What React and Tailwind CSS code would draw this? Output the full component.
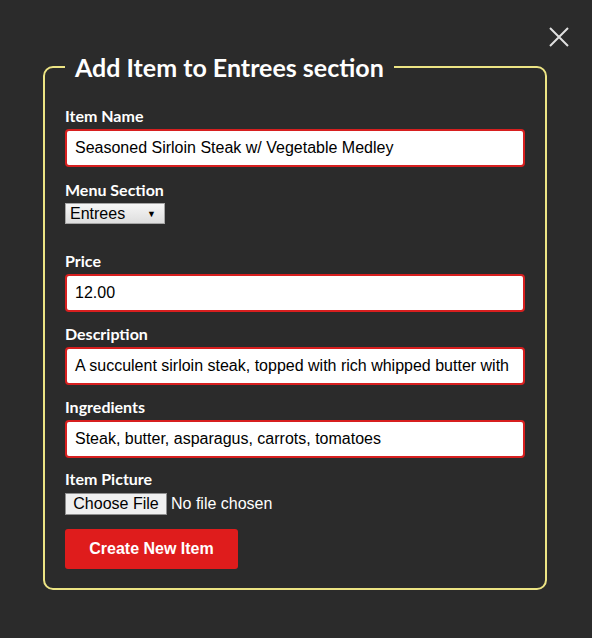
import React from "react";

function Field({ label, value, className = "" }) {
  return (
    <div className={"flex flex-col " + className}>
      <label className="block text-[16px] leading-5 font-bold text-white font-['Lato',sans-serif] mb-[3px]">{label}</label>
      <div className="h-[38px] w-[460px] border-2 border-[#d71f1f] rounded-[4px] bg-white px-2 flex items-center overflow-hidden whitespace-nowrap">
        <span className="text-[16px] text-black font-['Liberation_Sans',Arial,sans-serif]">{value}</span>
      </div>
    </div>
  );
}

export default function App() {
  return (
    <div className="relative w-[592px] h-[638px] bg-[#2b2b2b] pt-[52px] pl-[43px]">
      <button className="absolute left-[548px] top-[26px] w-[22px] h-[22px]" aria-label="close">
        <svg width="22" height="22" viewBox="0 0 22 22">
          <path d="M2 2 L20 20 M20 2 L2 20" stroke="#e0e0e0" strokeWidth="2" strokeLinecap="butt" />
        </svg>
      </button>
      <fieldset className="w-[504px] h-[538px] border-2 border-[#ece484] rounded-[10px] px-5 pb-5">
        <legend className="ml-0 px-[10px] text-[25px] leading-[30px] font-bold text-white font-['Lato',sans-serif]">
          Add Item to Entrees section
        </legend>
        <div className="flex flex-col pt-[24px]">
          <Field label="Item Name" value="Seasoned Sirloin Steak w/ Vegetable Medley" />
          <div className="flex flex-col mt-[13px]">
            <label className="block text-[16px] leading-5 font-bold text-white font-['Lato',sans-serif] mb-[3px]">Menu Section</label>
            <div className="w-[100px] h-[21px] border border-[#a6a6a6] bg-gradient-to-b from-[#f6f6f6] to-[#dedede] flex items-center justify-between pl-[4px] pr-[8px]">
              <span className="text-[16px] leading-none text-black font-['Liberation_Sans',Arial,sans-serif]">Entrees</span>
              <span className="text-[9px] leading-none text-black">▼</span>
            </div>
          </div>
          <Field label="Price" value="12.00" className="mt-[27px]" />
          <Field label="Description" value="A succulent sirloin steak, topped with rich whipped butter with" className="mt-[12px]" />
          <Field label="Ingredients" value="Steak, butter, asparagus, carrots, tomatoes" className="mt-[12px]" />
          <div className="flex flex-col mt-[11px]">
            <label className="block text-[16px] leading-5 font-bold text-white font-['Lato',sans-serif] mb-[3px]">Item Picture</label>
            <div className="flex items-center">
              <div className="h-[22px] w-[102px] border border-[#8f8f8f] bg-[#efefef] flex items-center justify-center text-[16px] text-black font-['Liberation_Sans',Arial,sans-serif]">Choose File</div>
              <span className="ml-[4px] text-[16px] text-white font-['Liberation_Sans',Arial,sans-serif]">No file chosen</span>
            </div>
          </div>
          <button className="mt-[13px] w-[173px] h-[40px] bg-[#df1c1c] rounded-[3px] text-white text-[16px] font-bold font-['Liberation_Sans',Arial,sans-serif]">
            Create New Item
          </button>
        </div>
      </fieldset>
    </div>
  );
}
